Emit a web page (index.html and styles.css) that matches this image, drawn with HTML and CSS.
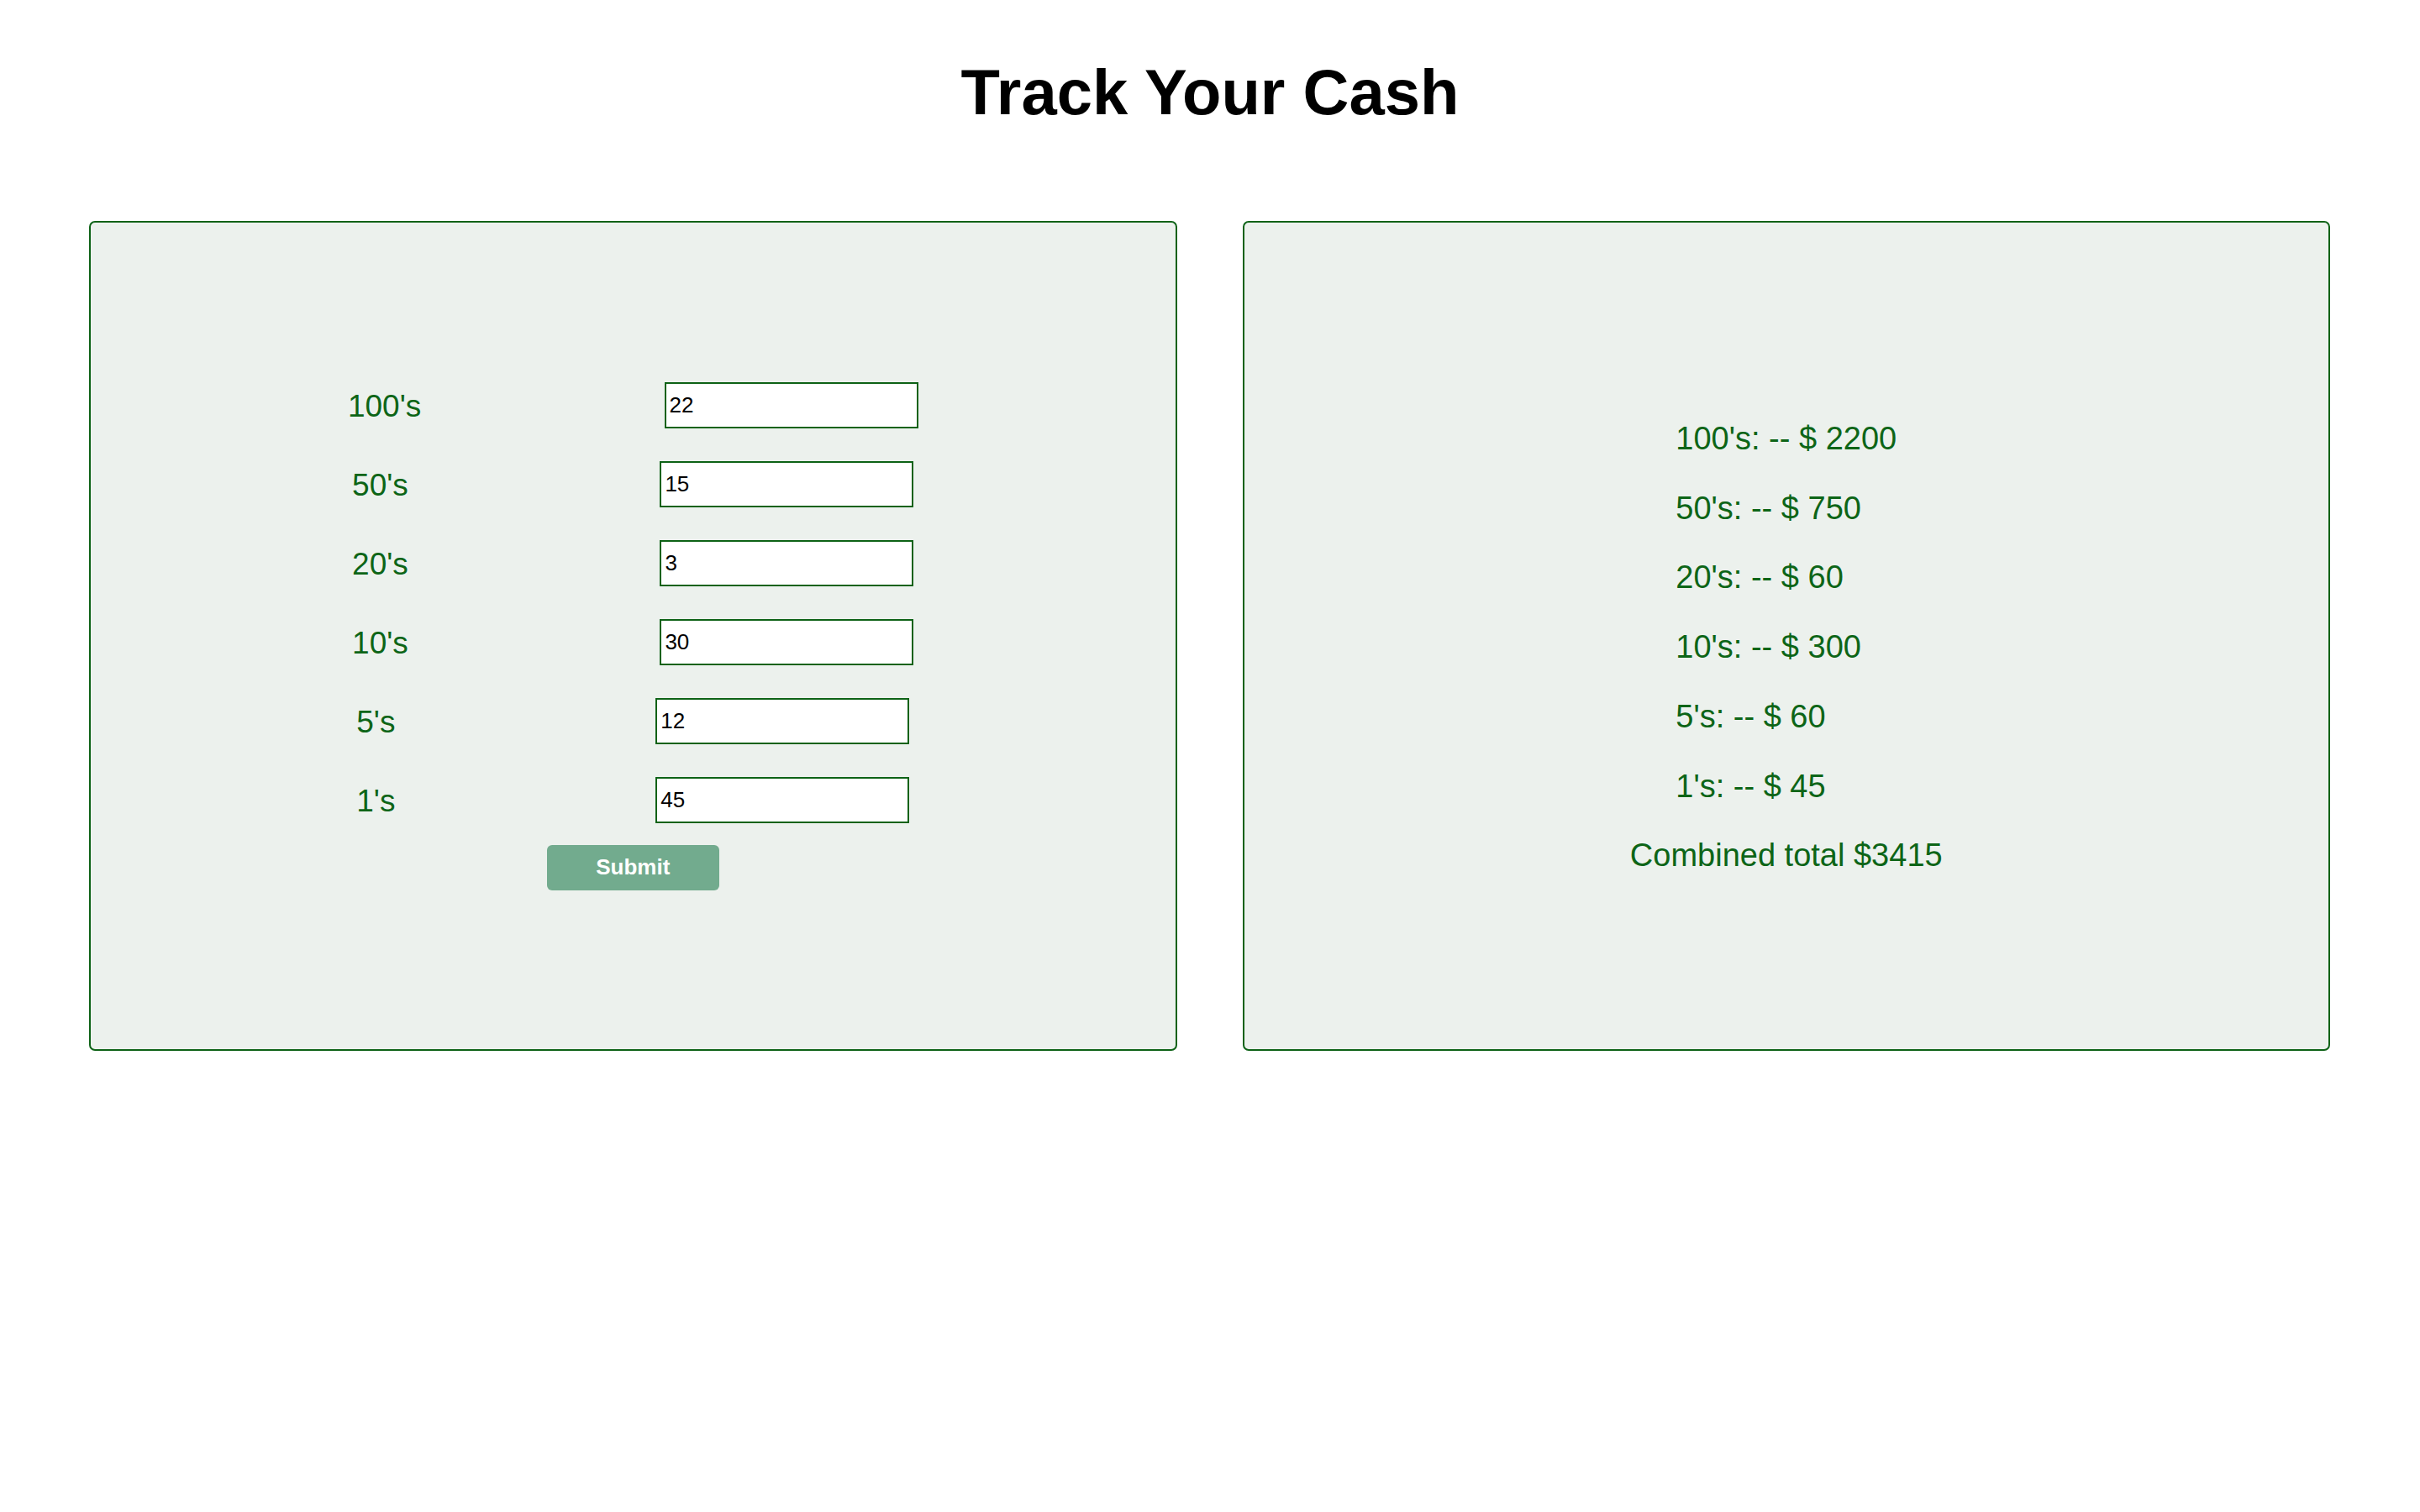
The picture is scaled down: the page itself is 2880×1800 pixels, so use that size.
FILE: index.html
```html
<!DOCTYPE html>
<html lang="en">
<head>
<meta charset="utf-8">
<title>Track Your Cash</title>
<link rel="stylesheet" href="styles.css">
</head>
<body>
  <h1 class="title">Track Your Cash</h1>
  <main class="panels">
    <section class="panel">
      <form class="cash-form">
        <div class="rows">
          <div class="row"><label class="label">100's</label><input class="field" type="text" value="22"></div>
          <div class="row"><label class="label">50's</label><input class="field" type="text" value="15"></div>
          <div class="row"><label class="label">20's</label><input class="field" type="text" value="3"></div>
          <div class="row"><label class="label">10's</label><input class="field" type="text" value="30"></div>
          <div class="row"><label class="label">5's</label><input class="field" type="text" value="12"></div>
          <div class="row"><label class="label">1's</label><input class="field" type="text" value="45"></div>
        </div>
        <button class="submit" type="button">Submit</button>
      </form>
    </section>
    <section class="panel">
      <div class="summary">
        <div class="list">
          <div class="line">100's: -- $ 2200</div>
          <div class="line">50's: -- $ 750</div>
          <div class="line">20's: -- $ 60</div>
          <div class="line">10's: -- $ 300</div>
          <div class="line">5's: -- $ 60</div>
          <div class="line">1's: -- $ 45</div>
        </div>
        <div class="line total">Combined total $3415</div>
      </div>
    </section>
  </main>
</body>
</html>
```
FILE: styles.css
```css
html, body {
  margin: 0;
  padding: 0;
  background: #ffffff;
}

body {
  font-family: "Liberation Sans", Arial, Helvetica, sans-serif;
  color: #000;
}

.title {
  margin: 0;
  padding-top: 66px;
  font-size: 76px;
  line-height: 87px;
  font-weight: bold;
  text-align: center;
  color: #000;
}

.panels {
  display: flex;
  gap: 78px;
  padding: 110px 107px 0 106px;
}

.panel {
  flex: 1 1 0;
  box-sizing: border-box;
  height: 988px;
  border: 2px solid #0d6216;
  border-radius: 7px;
  background: #ecf1ed;
  display: flex;
  flex-direction: column;
  justify-content: center;
  align-items: center;
}

.cash-form {
  width: 75%;
  display: flex;
  flex-direction: column;
  align-items: center;
}

.rows {
  width: 100%;
  display: flex;
  flex-direction: column;
  gap: 39px;
}

.row {
  display: flex;
  justify-content: space-around;
  align-items: center;
}

.label {
  padding-top: 3px;
  font-size: 37px;
  color: #0d6517;
}

.field {
  box-sizing: border-box;
  width: 302px;
  height: 55px;
  margin: 0;
  padding: 0 4px;
  border: 2px solid #0d6216;
  border-radius: 0;
  background: #fff;
  font-family: "Liberation Sans", Arial, Helvetica, sans-serif;
  font-size: 26px;
  color: #000;
  outline: none;
}

.submit {
  margin-top: 26px;
  width: 205px;
  height: 54px;
  border: none;
  border-radius: 6px;
  background: #72ab8e;
  color: #fff;
  font-family: "Liberation Sans", Arial, Helvetica, sans-serif;
  font-size: 26px;
  font-weight: bold;
  padding: 0;
}

.summary {
  margin-top: 27px;
  display: flex;
  flex-direction: column;
  align-items: center;
}

.list {
  display: flex;
  flex-direction: column;
  align-items: flex-start;
}

.line {
  font-size: 38px;
  line-height: 82.7px;
  color: #0d6517;
  white-space: nowrap;
}
```
